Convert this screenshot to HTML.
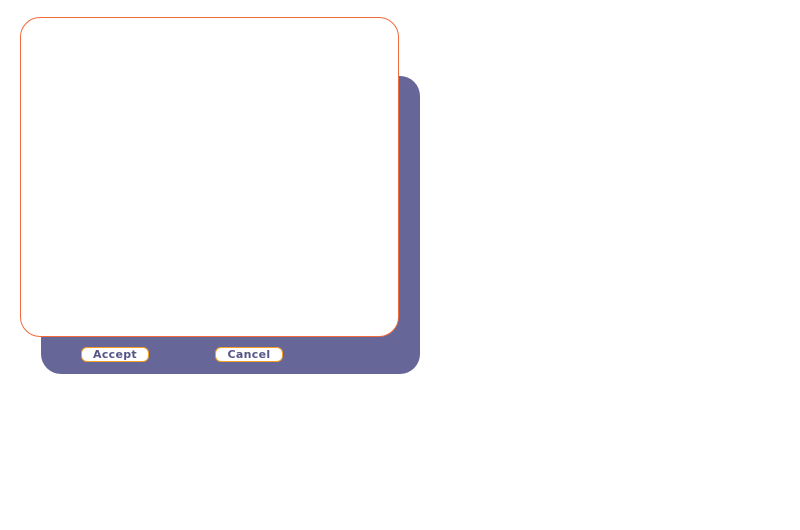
<!DOCTYPE html>
<html><head><style>
body{margin:0;width:800px;height:530px;background:#fff;position:relative;overflow:hidden;font-family:"DejaVu Sans","Liberation Sans",sans-serif}
.back{position:absolute;left:41px;top:76px;width:379px;height:298px;background:#666699;border-radius:20px}
.front{position:absolute;left:20px;top:17px;width:377px;height:318px;background:#fff;border:1px solid #f26a3a;border-radius:20px}
.btn{position:absolute;top:347px;width:66px;height:13px;background:#fff;border:1px solid #f5a020;border-radius:6px;color:#555588;font-size:11px;font-weight:bold;text-align:center;line-height:13px;letter-spacing:0.3px}
</style></head><body>
<div class="back"></div>
<div class="front"></div>
<div class="btn" style="left:81px">Accept</div>
<div class="btn" style="left:215px">Cancel</div>
</body></html>
